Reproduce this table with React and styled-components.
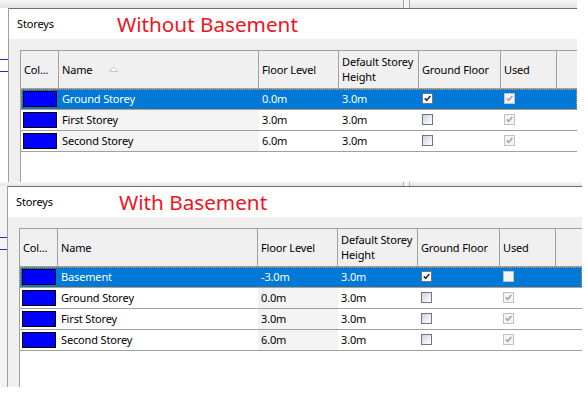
import React from 'react';
import styled, { createGlobalStyle } from 'styled-components';

const GlobalStyle = createGlobalStyle`
  html, body {
    margin: 0;
    padding: 0;
    background: #fff;
  }

  body {
    font-family: 'Noto Sans', 'Open Sans', sans-serif;
    font-size: 11px;
    letter-spacing: -0.15px;
    color: #000;
  }
`;

const COLUMNS = '38px 200px 80px 80px 82px 56px';

const Page = styled.div`
  display: flex;
  flex-direction: column;
  width: 588px;
  height: 397px;
  overflow: hidden;
`;

const Shot = styled.section`
  display: flex;
  flex-direction: column;
`;

const Band = styled.div`
  display: flex;
  height: ${p => p.$height}px;
  width: ${p => p.$width}px;
  background: linear-gradient(#f6f6f6, #e4e4e4);
`;

const Grip = styled.span`
  width: 5px;
  margin-left: ${p => p.$left}px;
  border-left: 1px solid #a8a8a8;
  border-right: 1px solid #a8a8a8;
  background: #f4f4f4;
`;

const ShotBody = styled.div`
  display: flex;
`;

const Backdrop = styled.div`
  width: ${p => p.$width}px;
  background:
    linear-gradient(#1c2fd8, #1c2fd8) 0 51px / 100% 1px no-repeat,
    linear-gradient(#1c2fd8, #1c2fd8) 0 63px / 100% 1px no-repeat,
    ${p => p.$tint};
`;

const Panel = styled.div`
  display: flex;
  flex-direction: column;
  width: ${p => p.$width}px;
  height: ${p => p.$height}px;
  box-sizing: border-box;
  border-top: 1px solid #6e6e6e;
  border-left: 1px solid #a0a0a0;
  background: #fff;
`;

const TitleBar = styled.div`
  display: grid;
  grid-template-columns: ${p => p.$labelWidth}px auto;
  align-items: center;
  height: 30px;
  padding-left: 8px;
`;

const Label = styled.span`
  font-size: 11px;
  padding-bottom: 1px;
`;

const Heading = styled.span`
  font-size: 20.7px;
  letter-spacing: 0;
  line-height: 30px;
  color: #ee1423;
  white-space: nowrap;
`;

const Body = styled.div`
  flex: 1;
  display: flex;
  min-height: 0;
  padding: 11px 0 0 11px;
  background: #f0f0f0;
`;

const Table = styled.div`
  flex: 1;
  display: flex;
  flex-direction: column;
  border-top: 1px solid #a0a0a0;
  border-left: 1px solid #a0a0a0;
  background: #fff;
`;

const HeaderRow = styled.div`
  display: grid;
  grid-template-columns: ${COLUMNS} 1fr;
  height: 38px;
  box-sizing: border-box;
  border-bottom: 1px solid #a0a0a0;
  background: #f0f0f0;
`;

const HeaderCell = styled.div`
  display: flex;
  align-items: center;
  gap: 17px;
  padding: 0 3px 1px;
  box-sizing: border-box;
  border-right: ${p => (p.$filler ? 'none' : '1px solid #a0a0a0')};
  line-height: 15px;
  white-space: nowrap;
  overflow: hidden;
`;

const Row = styled.div`
  display: grid;
  grid-template-columns: ${COLUMNS};
  height: 21px;
  box-sizing: border-box;
  border-bottom: 1px solid #a0a0a0;
  color: ${p => (p.$selected ? '#fff' : '#000')};
  background: ${p => (p.$selected ? '#0078d7' : '#fff')};
  outline: ${p => (p.$selected ? '1px dotted #e59a3c' : 'none')};
  outline-offset: -1px;
`;

const Cell = styled.div`
  display: flex;
  align-items: center;
  padding: 0 3px 1px;
  white-space: nowrap;
  background: ${p => (p.$sorted ? '#f3f3f3' : 'transparent')};
`;

const SwatchCell = styled.div`
  display: flex;
  align-items: center;
  padding-left: 2px;
`;

const Swatch = styled.span`
  width: 34px;
  height: 16px;
  box-sizing: border-box;
  border: 1px solid #000;
  background: ${p => p.$color};
`;

const Box = styled.span`
  display: flex;
  align-items: center;
  justify-content: center;
  width: 11px;
  height: 11px;
  box-sizing: border-box;
  border: 1px solid ${p => (p.$disabled ? '#c2c2c2' : '#717488')};
  background: ${p =>
    p.$disabled
      ? '#f4f4f4'
      : p.$checked
      ? '#fff'
      : 'linear-gradient(135deg, #cfd0de 0%, #f2f2f7 70%, #fff 100%)'};
`;

const Check = ({ checked, disabled }) => (
  <Box $checked={checked} $disabled={disabled}>
    {checked && (
      <svg width="7" height="7" viewBox="0 0 7 7">
        <polyline
          points="0.8,3.4 2.7,5.4 6.3,1"
          fill="none"
          stroke={disabled ? '#a4a4a4' : '#2b2b2b'}
          strokeWidth="1.6"
        />
      </svg>
    )}
  </Box>
);

const SortArrow = () => (
  <svg width="9" height="6" viewBox="0 0 9 6">
    <polygon points="4.5,0.5 8.5,5.5 0.5,5.5" fill="#fafafa" stroke="#c4c4c4" />
  </svg>
);

const StoreyTable = ({ rows, sortedBy, showArrow }) => (
  <Table>
    <HeaderRow>
      <HeaderCell>Col...</HeaderCell>
      <HeaderCell>
        Name
        {showArrow && <SortArrow />}
      </HeaderCell>
      <HeaderCell>Floor Level</HeaderCell>
      <HeaderCell>
        Default Storey
        <br />
        Height
      </HeaderCell>
      <HeaderCell>Ground Floor</HeaderCell>
      <HeaderCell>Used</HeaderCell>
      <HeaderCell $filler />
    </HeaderRow>
    {rows.map(row => (
      <Row key={row.name} $selected={row.selected}>
        <SwatchCell>
          <Swatch $color="#0000ff" />
        </SwatchCell>
        <Cell $sorted={!row.selected && sortedBy === 'name'}>{row.name}</Cell>
        <Cell $sorted={!row.selected && sortedBy === 'level'}>{row.level}</Cell>
        <Cell>{row.height}</Cell>
        <Cell>
          <Check checked={row.ground} />
        </Cell>
        <Cell>
          <Check checked={row.used} disabled />
        </Cell>
      </Row>
    ))}
  </Table>
);

const StoreyShot = ({
  heading,
  bandHeight,
  stripWidth,
  stripTint,
  width,
  height,
  labelWidth,
  gripLeft,
  rows,
  sortedBy,
  showArrow,
}) => (
  <Shot>
    <Band $height={bandHeight} $width={stripWidth + width}>
      <Grip $left={gripLeft} />
    </Band>
    <ShotBody>
      <Backdrop $width={stripWidth} $tint={stripTint} />
      <Panel $width={width} $height={height}>
        <TitleBar $labelWidth={labelWidth}>
          <Label>Storeys</Label>
          <Heading>{heading}</Heading>
        </TitleBar>
        <Body>
          <StoreyTable rows={rows} sortedBy={sortedBy} showArrow={showArrow} />
        </Body>
      </Panel>
    </ShotBody>
  </Shot>
);

const withoutBasement = [
  { name: 'Ground Storey', level: '0.0m', height: '3.0m', ground: true, used: true, selected: true },
  { name: 'First Storey', level: '3.0m', height: '3.0m', ground: false, used: true },
  { name: 'Second Storey', level: '6.0m', height: '3.0m', ground: false, used: true },
];

const withBasement = [
  { name: 'Basement', level: '-3.0m', height: '3.0m', ground: true, used: false, selected: true },
  { name: 'Ground Storey', level: '0.0m', height: '3.0m', ground: false, used: true },
  { name: 'First Storey', level: '3.0m', height: '3.0m', ground: false, used: true },
  { name: 'Second Storey', level: '6.0m', height: '3.0m', ground: false, used: true },
];

const App = () => (
  <Page>
    <GlobalStyle />
    <StoreyShot
      heading="Without Basement"
      bandHeight={8}
      stripWidth={8}
      stripTint="#fff"
      width={569}
      height={174}
      labelWidth={100}
      gripLeft={403}
      rows={withoutBasement}
      sortedBy="name"
      showArrow
    />
    <StoreyShot
      heading="With Basement"
      bandHeight={4}
      stripWidth={7}
      stripTint="#f3f3f3"
      width={575}
      height={201}
      labelWidth={103}
      gripLeft={403}
      rows={withBasement}
      sortedBy="level"
    />
  </Page>
);

export default App;
